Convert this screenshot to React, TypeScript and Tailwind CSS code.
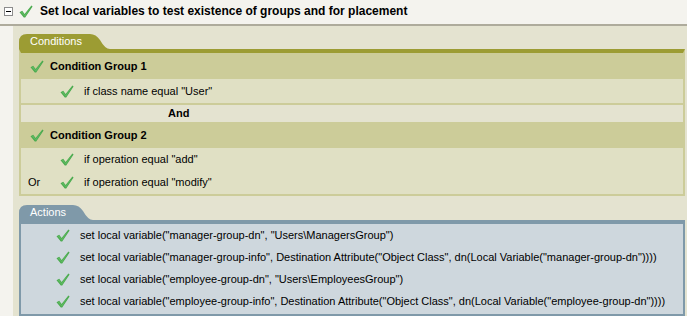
const font = "font-['Liberation_Sans',Arial,sans-serif]";

function Check({ className = "" }: { className?: string }) {
  return (
    <svg viewBox="0 0 14 13" className={`h-[13px] w-[14px] shrink-0 ${className}`} aria-hidden>
      <path d="M0.5 7.2 L3.2 5.8 L5.6 9 L12.4 0.6 L13.6 1.6 L6.2 12.6 L4.8 12.6 Z" fill="#4aaa4e" />
      <path d="M1.6 7.2 L3.1 6.6 L5.5 9.9 L12.6 1.3 L6 11.8 Z" fill="#6cc46e" opacity="0.6" />
    </svg>
  );
}

function Tab({ label, width, color }: { label: string; width: number; color: string }) {
  return (
    <div className="relative h-[15px]" style={{ width }}>
      <svg className="absolute inset-0" width={width} height={15} viewBox={`0 0 ${width} 15`} aria-hidden>
        <path
          d={`M0 15 L0 8 Q0 0 8 0 L${width - 20} 0 Q${width - 14} 0 ${width - 10} 6 Q${width - 5} 15 ${width} 15 Z`}
          fill={color}
        />
      </svg>
      <span className="relative block pl-[11px] text-[11px] leading-[15px] text-white">{label}</span>
    </div>
  );
}

function CondRow({ prefix, text }: { prefix?: string; text: string }) {
  return (
    <div className="flex h-[23px] items-center">
      <span className="w-[39px] pl-[7px]">{prefix}</span>
      <Check />
      <span className="pl-[10px]">{text}</span>
    </div>
  );
}

function GroupRow({ title }: { title: string }) {
  return (
    <div className="flex h-[26px] items-center bg-[#cccc99] pl-[9px]">
      <Check />
      <span className="pl-[6px] font-bold">{title}</span>
    </div>
  );
}

const actions = [
  'set local variable("manager-group-dn", "Users\\ManagersGroup")',
  'set local variable("manager-group-info", Destination Attribute("Object Class", dn(Local Variable("manager-group-dn"))))',
  'set local variable("employee-group-dn", "Users\\EmployeesGroup")',
  'set local variable("employee-group-info", Destination Attribute("Object Class", dn(Local Variable("employee-group-dn"))))',
];

export default function App() {
  return (
    <div className={`flex h-[316px] w-[687px] flex-col overflow-hidden bg-[#f4f3ee] text-[11px] text-black ${font}`}>
      <div className="flex h-[26px] shrink-0 items-center border-b-2 border-[#aeab9c] pb-[2px]">
        <div className="ml-[4px] flex h-[9px] w-[9px] items-center justify-center border border-[#8c8c8c] bg-white">
          <div className="h-px w-[5px] bg-black" />
        </div>
        <Check className="ml-[6px]" />
        <span className="pl-[7px] text-[12px] font-bold">Set local variables to test existence of groups and for placement</span>
      </div>
      <div className="flex flex-1">
        <div className="w-[13px] shrink-0" />
        <div className="flex flex-1 flex-col bg-[#e4e3d0] pl-[6px] pr-[2px] pt-[8px]">
          <Tab label="Conditions" width={91} color="#9c9c33" />
          <div className="border-x-2 border-b-2 border-t-4 border-[#cccc99] border-t-[#9c9c33]">
            <GroupRow title="Condition Group 1" />
            <div className="bg-[#e0e0c4] pt-px">
              <CondRow text='if class name equal "User"' />
            </div>
            <div className="flex h-[19px] items-center border-t-2 border-[#cccc99] pl-[147px] font-bold">And</div>
            <GroupRow title="Condition Group 2" />
            <div className="bg-[#e0e0c4]">
              <CondRow text='if operation equal "add"' />
              <CondRow prefix="Or" text='if operation equal "modify"' />
            </div>
          </div>
          <div className="mt-[9px]">
            <Tab label="Actions" width={74} color="#7f99a9" />
          </div>
          <div className="flex-1 border-x-2 border-b-2 border-t-4 border-[#7f99a9] bg-[#ced7dd]">
            {actions.map((a) => (
              <div key={a} className="flex h-[22px] items-center pl-[35px]">
                <Check />
                <span className="pl-[10px]">{a}</span>
              </div>
            ))}
          </div>
        </div>
      </div>
    </div>
  );
}
